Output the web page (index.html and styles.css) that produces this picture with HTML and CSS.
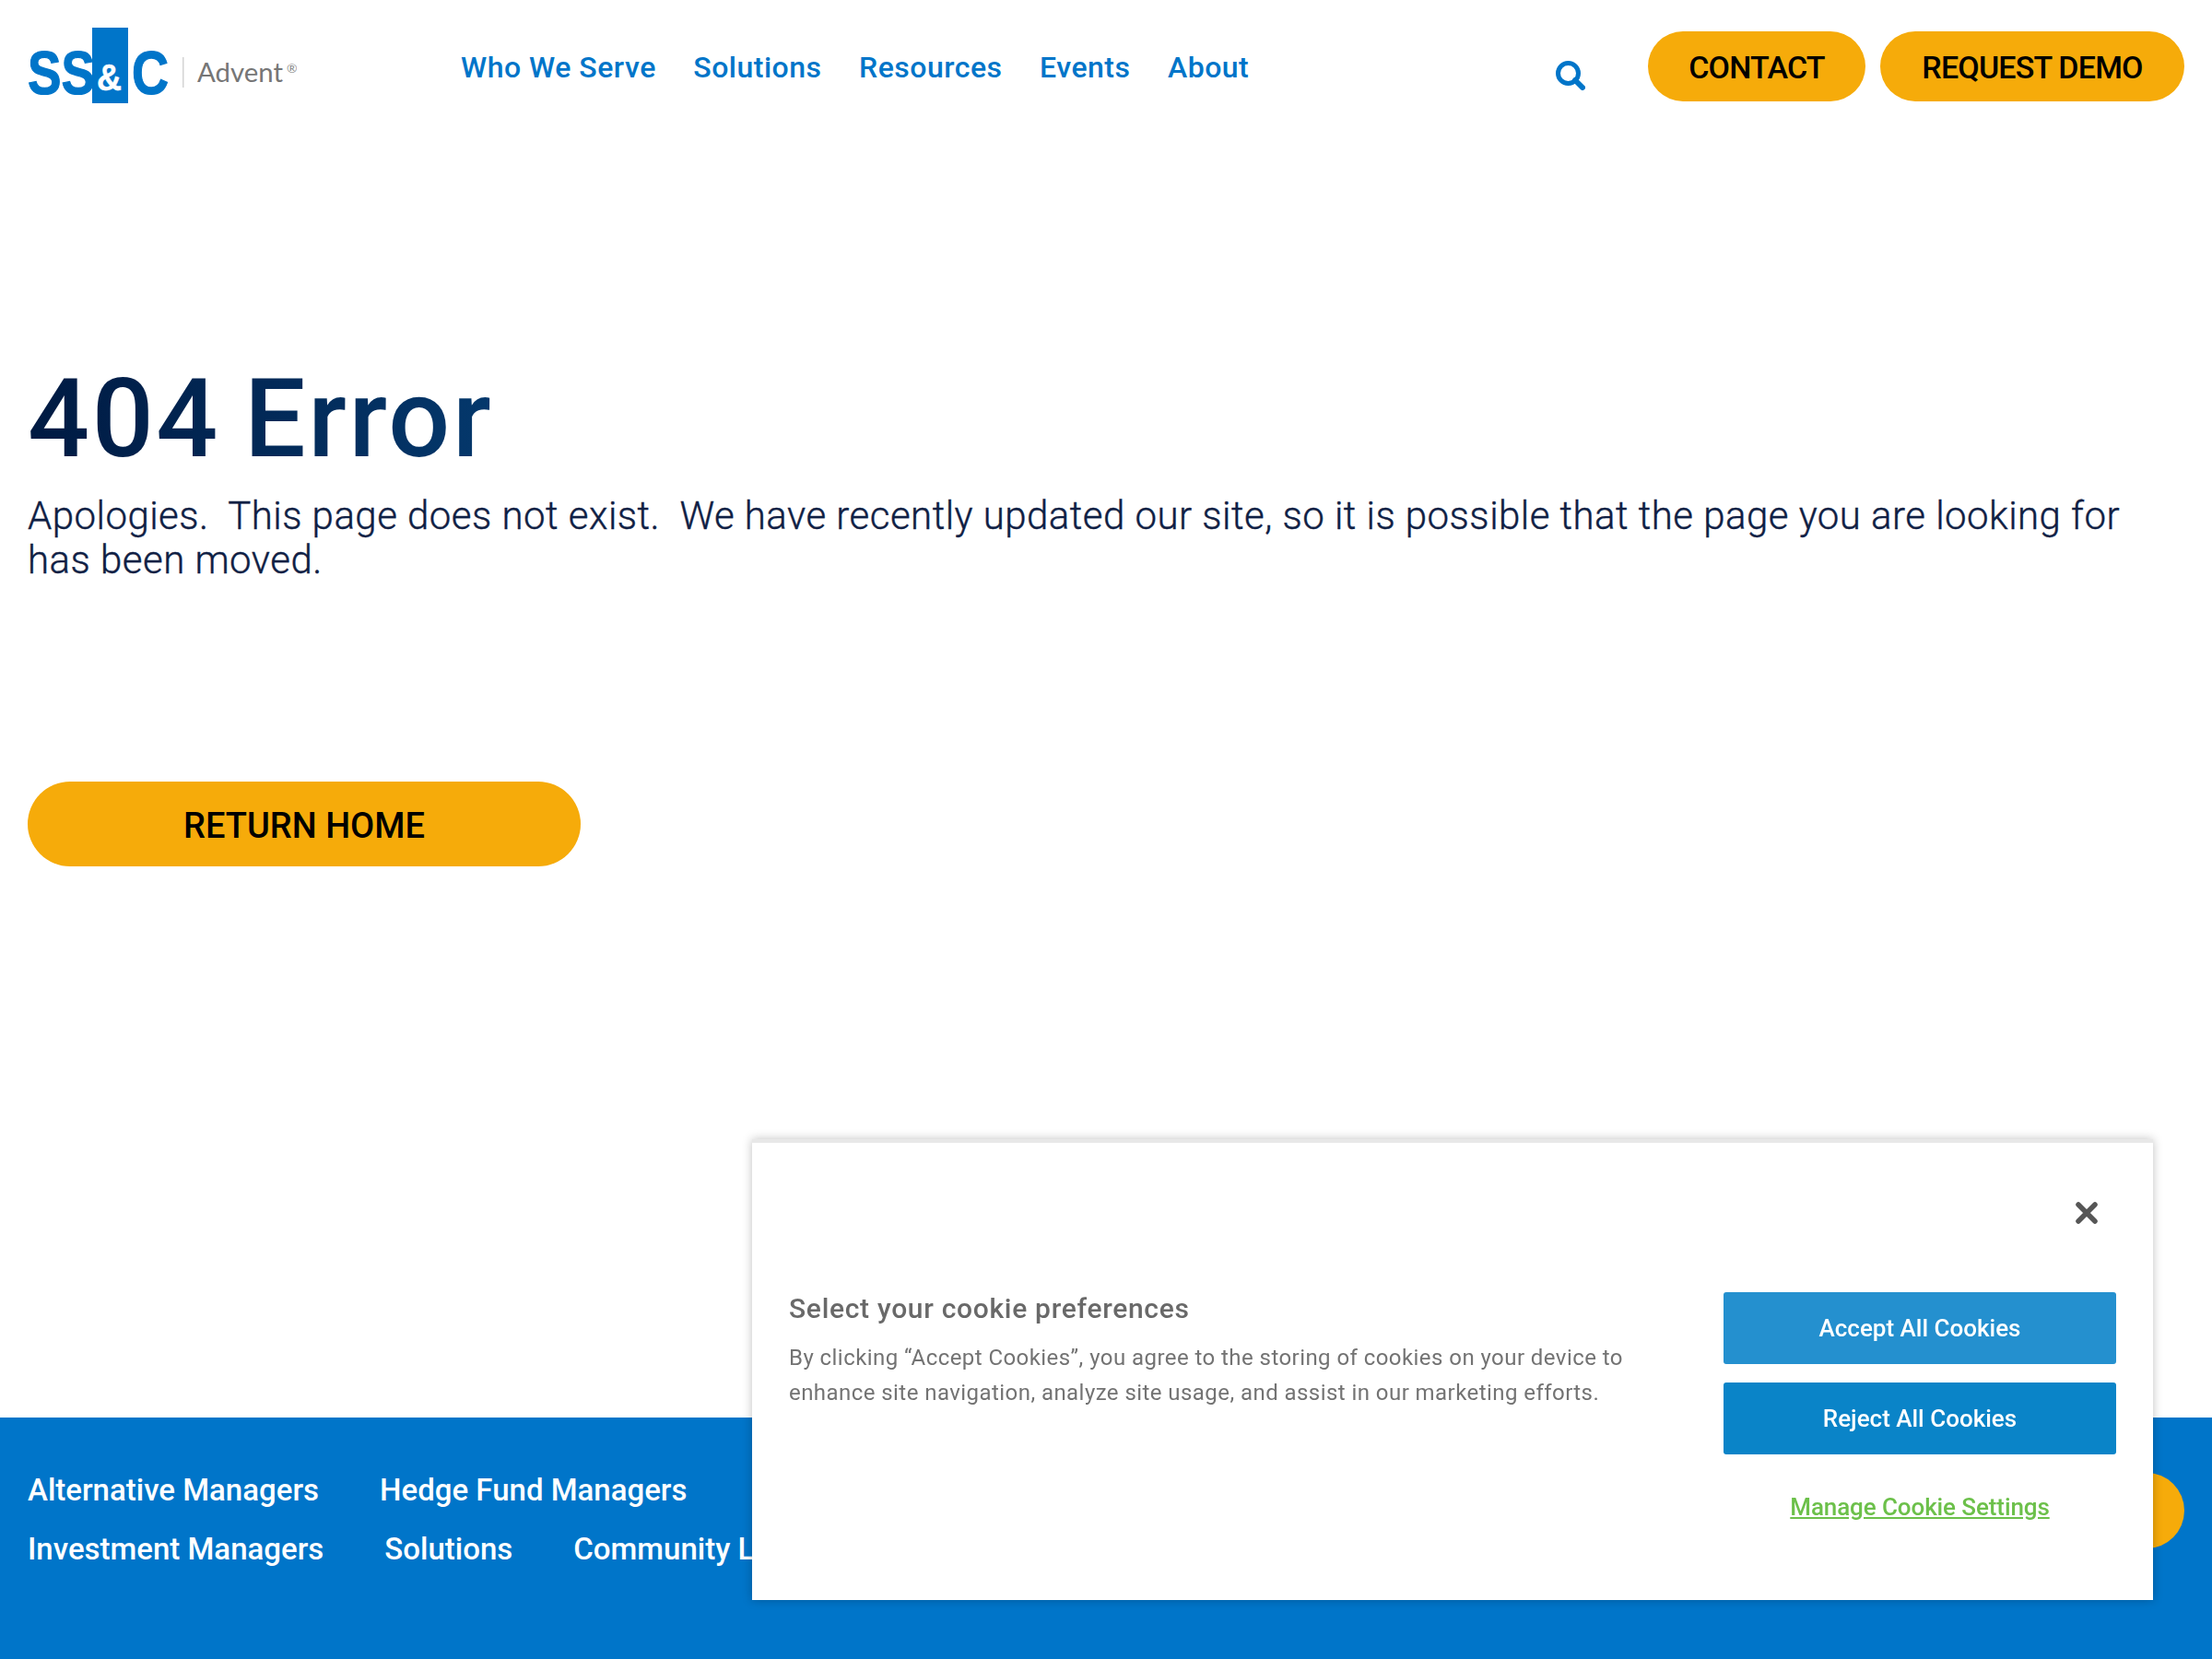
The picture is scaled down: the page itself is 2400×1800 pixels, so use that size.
FILE: index.html
```html
<!DOCTYPE html>
<html lang="en">
<head>
<meta charset="utf-8">
<title>404 Error</title>
<link rel="stylesheet" href="styles.css">
</head>
<body>
<div class="page">
  <header class="header">
    <a class="logo" href="#" aria-label="SS&amp;C Advent">
      <svg width="292" height="112" viewBox="0 0 292 112">
        <rect x="70" y="30" width="39" height="82" fill="#0075c9"/>
        <text x="0" y="102" class="logo-ss" textLength="73" lengthAdjust="spacingAndGlyphs">SS</text>
        <text x="75" y="98" class="logo-amp" textLength="27" lengthAdjust="spacingAndGlyphs">&amp;</text>
        <text x="113" y="102" class="logo-ss" textLength="40" lengthAdjust="spacingAndGlyphs">C</text>
        <rect x="168" y="62" width="1.5" height="33" fill="#d4d4d4"/>
        <text x="184" y="89" class="logo-adv" textLength="93" lengthAdjust="spacingAndGlyphs">Advent</text>
        <text x="281" y="79" class="logo-reg">®</text>
      </svg>
    </a>
    <nav class="nav">
      <a href="#">Who We Serve</a>
      <a href="#">Solutions</a>
      <a href="#">Resources</a>
      <a href="#">Events</a>
      <a href="#">About</a>
    </nav>
    <a class="search" href="#" aria-label="Search">
      <svg width="32" height="32" viewBox="0 0 32 32">
        <circle cx="13.5" cy="13.5" r="11" fill="none" stroke="#0075c9" stroke-width="5"/>
        <path d="M21 21 L29 29" stroke="#0075c9" stroke-width="6" stroke-linecap="round" fill="none"/>
      </svg>
    </a>
    <div class="actions">
      <a class="pill pill-contact" href="#">CONTACT</a>
      <a class="pill pill-demo" href="#">REQUEST DEMO</a>
    </div>
  </header>

  <main class="main">
    <h1 class="title">404 Error</h1>
    <p class="lead">Apologies.&nbsp; This page does not exist.&nbsp; We have recently updated our site, so it is possible that the page you are looking for has been moved.</p>
    <a class="home" href="#">RETURN HOME</a>
  </main>

  <footer class="footer">
    <div class="foot-links">
      <div class="foot-row">
        <a href="#">Alternative Managers</a>
        <a href="#">Hedge Fund Managers</a>
      </div>
      <div class="foot-row">
        <a href="#">Investment Managers</a>
        <a href="#">Solutions</a>
        <a href="#">Community Links</a>
      </div>
    </div>
    <a class="foot-pill" href="#"></a>
  </footer>
</div>

<section class="cookie" aria-label="Cookie preferences">
  <button class="cookie-close" aria-label="Close">
    <svg width="24" height="24" viewBox="0 0 24 24"><path d="M3 3 L21 21 M21 3 L3 21" stroke="#565656" stroke-width="5.5" stroke-linecap="round" fill="none"/></svg>
  </button>
  <div class="cookie-body">
    <div class="cookie-text">
      <h2 class="cookie-title">Select your cookie preferences</h2>
      <p class="cookie-desc">By clicking “Accept Cookies”, you agree to the storing of cookies on your device to enhance site navigation, analyze site usage, and assist in our marketing efforts.</p>
    </div>
    <div class="cookie-actions">
      <button class="cbtn cbtn-accept">Accept All Cookies</button>
      <button class="cbtn cbtn-reject">Reject All Cookies</button>
      <a class="cookie-manage" href="#">Manage Cookie Settings</a>
    </div>
  </div>
</section>
</body>
</html>
```
FILE: styles.css
```css
* { box-sizing: border-box; }
html, body { margin: 0; padding: 0; }
body { font-family: Roboto, "Noto Sans", sans-serif; background: #fff; color: #0f2044; }
a { text-decoration: none; color: inherit; }
.page { min-height: 1800px; display: flex; flex-direction: column; }

.header { display: flex; align-items: flex-start; padding: 0 30px; height: 146px; }
.logo { display: block; width: 292px; height: 112px; flex: none; }
.logo svg { display: block; }
.logo-ss { font: 700 66px "Liberation Sans", sans-serif; fill: #0075c9; stroke: #0075c9; stroke-width: 1.2px; }
.logo-amp { font: 700 40px "Liberation Sans", sans-serif; fill: #fff; stroke: #fff; stroke-width: 0.5px; }
.logo-adv { font: 400 28px Lato, sans-serif; fill: #767676; }
.logo-reg { font: 400 14px Lato, sans-serif; fill: #8a8a8a; }

.nav { display: flex; gap: 40.5px; margin-left: 178px; padding-top: 53px; font-size: 32px; line-height: 40px; font-weight: 500; letter-spacing: 0.5px; color: #0075c9; }
.search { display: block; margin-left: auto; margin-top: 66px; width: 32px; height: 32px; }
.search svg { display: block; }
.actions { display: flex; gap: 16px; margin-left: 68px; padding-top: 34px; }
.pill { display: flex; align-items: center; justify-content: center; height: 76px; border-radius: 38px; background: #f6ab0a; color: #000; font-size: 34px; font-weight: 500; letter-spacing: -0.8px; padding-top: 2px; }
.pill-contact { width: 236px; }
.pill-demo { width: 330px; }

.main { flex: 1; padding: 229px 30px 0; }
.title { margin: 0; width: fit-content; font-size: 118px; line-height: 161px; font-weight: 500; letter-spacing: 2.6px; word-spacing: -6px; background: linear-gradient(90deg, #001a42, #04386c); -webkit-background-clip: text; background-clip: text; color: transparent; }
.lead { margin: 0; font-size: 42px; line-height: 48px; font-weight: 300; letter-spacing: 0.47px; color: #0f2044; -webkit-text-stroke: 0.4px #0f2044; }
.home { display: flex; align-items: center; justify-content: center; width: 600px; height: 92px; margin-top: 216px; border-radius: 46px; background: #f6ab0a; color: #000; font-size: 38px; font-weight: 500; padding-top: 3px; }

.footer { position: relative; height: 262px; background: #0075c9; padding: 58px 30px 0; display: flex; justify-content: space-between; align-items: flex-start; }
.foot-links { display: flex; flex-direction: column; gap: 22px; color: #fff; font-size: 33px; line-height: 42px; font-weight: 500; }
.foot-row { display: flex; gap: 66px; }
.foot-pill { display: block; width: 200px; height: 82px; margin-top: 2px; border-radius: 41px; background: #f6ab0a; }

.cookie { position: fixed; left: 816px; top: 1236px; width: 1520px; height: 500px; background: #fff; box-shadow: 0 0 10px rgba(0,0,0,.25); border-top: 4px solid #e8e8e8; }
.cookie-close { position: absolute; right: 60px; top: 64px; width: 24px; height: 24px; padding: 0; border: 0; background: none; }
.cookie-close svg { display: block; }
.cookie-body { display: flex; justify-content: space-between; padding: 162px 40px 0; }
.cookie-text { width: 930px; }
.cookie-title { margin: 0 0 17px; font-size: 30px; line-height: 36px; font-weight: 500; letter-spacing: 0.7px; color: #696969; }
.cookie-desc { margin: 0; font-size: 24px; line-height: 37.5px; font-weight: 400; letter-spacing: 0.44px; color: #737373; }
.cookie-actions { display: flex; flex-direction: column; width: 426px; gap: 20px; align-items: center; }
.cbtn { width: 100%; height: 78px; border: 0; border-radius: 3px; color: #fff; font-family: inherit; font-size: 26px; font-weight: 500; }
.cbtn-accept { background: #2490cf; }
.cbtn-reject { background: #0a84c8; }
.cookie-manage { margin-top: 20px; font-size: 26px; line-height: 34px; font-weight: 500; letter-spacing: -0.1px; color: #6cc04a; text-decoration: underline; }
```
